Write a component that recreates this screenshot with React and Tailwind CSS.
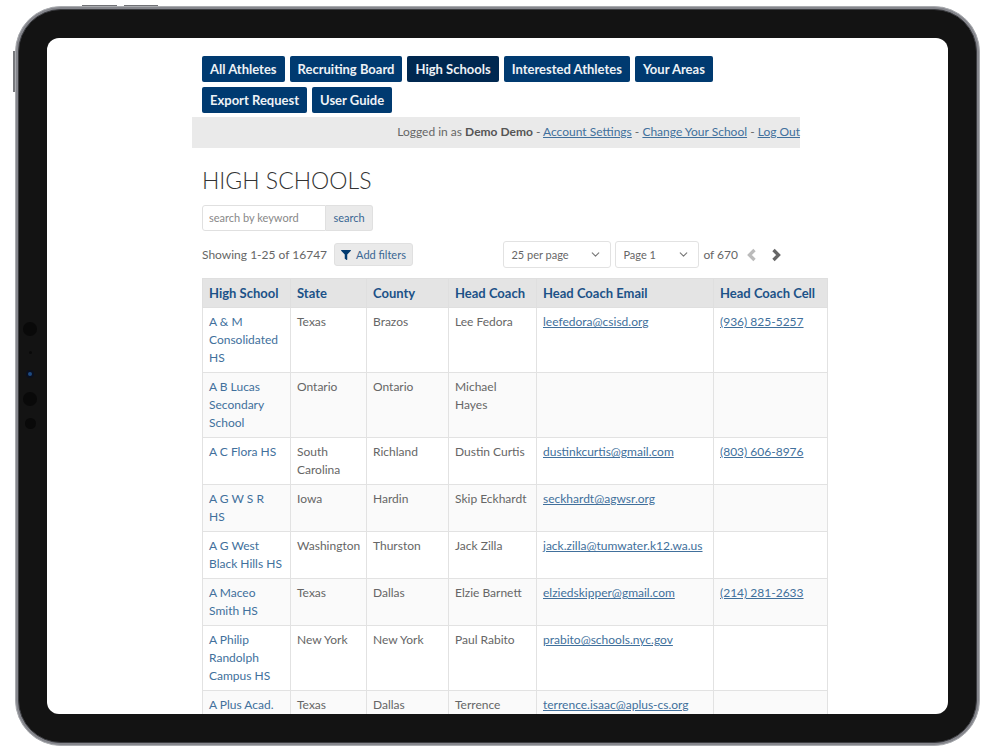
import { useState } from 'react'
import { FaFilter } from 'react-icons/fa'
import { ChevronDown, ChevronLeft, ChevronRight } from 'lucide-react'

const NAV_ITEMS = [
  'All Athletes',
  'Recruiting Board',
  'High Schools',
  'Interested Athletes',
  'Your Areas',
  'Export Request',
  'User Guide',
]

const COLUMNS = [
  { label: 'High School', width: 'w-[88px]' },
  { label: 'State', width: 'w-[76px]' },
  { label: 'County', width: 'w-[82px]' },
  { label: 'Head Coach', width: 'w-[88px]' },
  { label: 'Head Coach Email', width: '' },
  { label: 'Head Coach Cell', width: 'w-[114px]' },
]

const SCHOOLS = [
  { name: 'A & M Consolidated HS', state: 'Texas', county: 'Brazos', coach: 'Lee Fedora', email: 'leefedora@csisd.org', cell: '(936) 825-5257' },
  { name: 'A B Lucas Secondary School', state: 'Ontario', county: 'Ontario', coach: 'Michael Hayes' },
  { name: 'A C Flora HS', state: 'South Carolina', county: 'Richland', coach: 'Dustin Curtis', email: 'dustinkcurtis@gmail.com', cell: '(803) 606-8976' },
  { name: 'A G W S R\nHS', state: 'Iowa', county: 'Hardin', coach: 'Skip Eckhardt', email: 'seckhardt@agwsr.org' },
  { name: 'A G West Black Hills HS', state: 'Washington', county: 'Thurston', coach: 'Jack Zilla', email: 'jack.zilla@tumwater.k12.wa.us' },
  { name: 'A Maceo Smith HS', state: 'Texas', county: 'Dallas', coach: 'Elzie Barnett', email: 'elziedskipper@gmail.com', cell: '(214) 281-2633' },
  { name: 'A Philip Randolph Campus HS', state: 'New York', county: 'New York', coach: 'Paul Rabito', email: 'prabito@schools.nyc.gov' },
  { name: 'A Plus Acad.', state: 'Texas', county: 'Dallas', coach: 'Terrence', email: 'terrence.isaac@aplus-cs.org' },
]

function Tablet({ children }) {
  return (
    <div className="h-screen bg-white pt-[6px] pr-5 pb-1 pl-[15px]">
      <div className="relative h-full">
        {/* Hardware buttons */}
        <div className="absolute -top-px left-[67px] h-[2px] w-[35px] bg-[#6f7074]" />
        <div className="absolute -top-px left-[109px] h-[2px] w-[34px] bg-[#6f7074]" />
        <div className="absolute top-[45px] -left-[2px] h-[41px] w-[3px] bg-[#77787c]" />

        <div className="relative h-full rounded-[46px] border border-[#a9abaf] bg-[#85868c] p-[2px]">
          <div className="h-full rounded-[43px] border border-[#3b3c40] bg-[#131313] p-7">
            <div className="h-full overflow-hidden rounded-xl bg-white">{children}</div>
          </div>
        </div>

        {/* Camera and sensors */}
        <div className="absolute top-[316px] left-2 flex w-[14px] flex-col items-center">
          <span className="size-[14px] rounded-full bg-[#090909]" />
          <span className="mt-[15px] size-[3px] rounded-full bg-[#090909]" />
          <span className="mt-4 flex size-2 items-center justify-center rounded-full bg-[#0a1020]">
            <span className="size-1 rounded-full bg-[#1d4a80]" />
          </span>
          <span className="mt-[14px] size-[14px] rounded-full bg-[#090909]" />
          <span className="mt-3 size-[11px] rounded-full bg-[#090909]" />
        </div>
      </div>
    </div>
  )
}

function PageSelect({ label, value, onChange, options, width }) {
  return (
    <div className={`relative ${width}`}>
      <select
        aria-label={label}
        value={value}
        onChange={(e) => onChange(e.target.value)}
        className="h-[27px] w-full appearance-none rounded-[3px] border border-[#e2e2e2] bg-white pl-[7px] text-[11px] text-[#666]"
      >
        {options.map((option) => (
          <option key={option}>{option}</option>
        ))}
      </select>
      <ChevronDown size={13} className="pointer-events-none absolute top-[7px] right-[9px] text-[#777]" />
    </div>
  )
}

export default function App() {
  const [keyword, setKeyword] = useState('')
  const [perPage, setPerPage] = useState('25 per page')
  const [page, setPage] = useState('Page 1')

  return (
    <Tablet>
      <div className="pt-[18px] pr-[120px] pl-[155px] font-['Lato',sans-serif] text-[12px] leading-[18px] text-[#666]">
        <nav className="mr-7 flex flex-wrap gap-[5px]">
          {NAV_ITEMS.map((item) => (
            <a
              key={item}
              href="#"
              className={`rounded-[2px] px-2 py-1 text-[13px] leading-[18px] font-bold text-[#eef2f6] ${item === 'High Schools' ? 'bg-[#002850]' : 'bg-[#003a70]'}`}
            >
              {item}
            </a>
          ))}
        </nav>

        <div className="mt-1 mr-7 -ml-[10px] h-[31px] bg-[#eaeaea] py-[6px] text-right whitespace-nowrap">
          Logged in as <b className="text-[#555]">Demo Demo</b> -{' '}
          <a href="#" className="text-[#41709c] underline">Account Settings</a> -{' '}
          <a href="#" className="text-[#41709c] underline">Change Your School</a> -{' '}
          <a href="#" className="text-[#41709c] underline">Log Out</a>
        </div>

        <h1 className="mt-4 text-[23px] leading-[32px] font-light text-[#333]">HIGH SCHOOLS</h1>

        <form className="mt-[9px] flex h-[26px]" onSubmit={(e) => e.preventDefault()}>
          <input
            type="text"
            aria-label="search by keyword"
            placeholder="search by keyword"
            value={keyword}
            onChange={(e) => setKeyword(e.target.value)}
            className="w-[124px] rounded-l-[3px] border border-[#e0e0e0] px-[6px] text-[11px] placeholder:text-[#888]"
          />
          <button type="submit" className="w-[47px] rounded-r-[3px] border border-l-0 border-[#e0e0e0] bg-[#eaeaea] text-[11px] text-[#3a6793]">
            search
          </button>
        </form>

        <div className="mt-[10px] flex items-center">
          <span>Showing 1-25 of 16747</span>
          <button type="button" className="ml-[7px] flex h-[23px] items-center gap-[5px] rounded-[3px] border border-[#e0e0e0] bg-[#eaeaea] px-[6px] text-[11px] text-[#3a6793]">
            <FaFilter size={10} className="text-[#003a70]" />
            Add filters
          </button>
          <div className="mr-[42px] ml-auto flex items-center gap-1">
            <PageSelect label="Results per page" value={perPage} onChange={setPerPage} options={['25 per page', '50 per page']} width="w-[108px]" />
            <PageSelect label="Page" value={page} onChange={setPage} options={['Page 1', 'Page 2']} width="w-[84px]" />
            <span>of 670</span>
            <button type="button" aria-label="Previous page" className="text-[#bbb]">
              <ChevronLeft size={20} strokeWidth={4} strokeLinecap="butt" strokeLinejoin="miter" />
            </button>
            <button type="button" aria-label="Next page" className="text-[#666]">
              <ChevronRight size={20} strokeWidth={4} strokeLinecap="butt" strokeLinejoin="miter" />
            </button>
          </div>
        </div>

        <table className="mt-[10px] w-full table-fixed border-collapse">
          <thead>
            <tr className="bg-[#e4e4e4]">
              {COLUMNS.map((col) => (
                <th key={col.label} className={`border border-[#dfdfdf] px-[6px] py-[5px] text-left text-[13px] leading-[18px] font-bold whitespace-nowrap text-[#1c5288] ${col.width}`}>
                  {col.label}
                </th>
              ))}
            </tr>
          </thead>
          <tbody>
            {SCHOOLS.map((school) => (
              <tr key={school.name} className="align-top even:bg-[#fafafa] [&>td]:border [&>td]:border-[#e2e2e2] [&>td]:px-[6px] [&>td]:py-[5px]">
                <td className="whitespace-pre-line">
                  <a href="#" className="text-[#41709c]">{school.name}</a>
                </td>
                <td>{school.state}</td>
                <td>{school.county}</td>
                <td>{school.coach}</td>
                <td>
                  {school.email && <a href={`mailto:${school.email}`} className="text-[#41709c] underline">{school.email}</a>}
                </td>
                <td>
                  {school.cell && <a href={`tel:${school.cell}`} className="text-[#41709c] underline">{school.cell}</a>}
                </td>
              </tr>
            ))}
          </tbody>
        </table>
      </div>
    </Tablet>
  )
}
